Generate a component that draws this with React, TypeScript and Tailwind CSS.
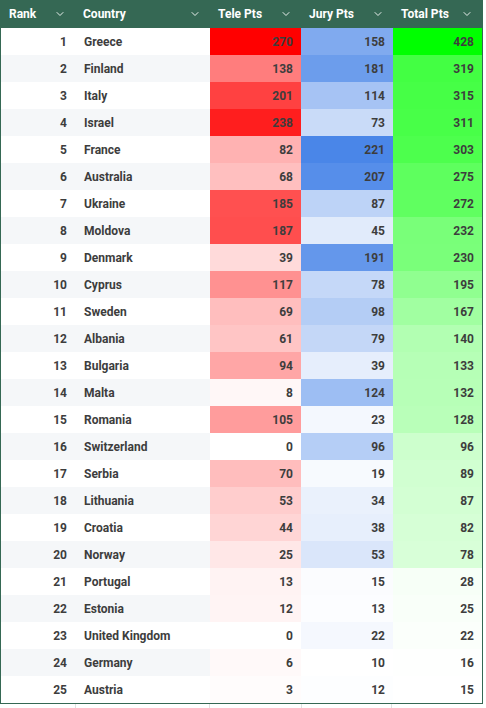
import { ChevronDown } from 'lucide-react';

type Row = { rank: number; country: string; tele: number; jury: number; total: number };

const rows: Row[] = [
  { rank: 1, country: 'Greece', tele: 270, jury: 158, total: 428 },
  { rank: 2, country: 'Finland', tele: 138, jury: 181, total: 319 },
  { rank: 3, country: 'Italy', tele: 201, jury: 114, total: 315 },
  { rank: 4, country: 'Israel', tele: 238, jury: 73, total: 311 },
  { rank: 5, country: 'France', tele: 82, jury: 221, total: 303 },
  { rank: 6, country: 'Australia', tele: 68, jury: 207, total: 275 },
  { rank: 7, country: 'Ukraine', tele: 185, jury: 87, total: 272 },
  { rank: 8, country: 'Moldova', tele: 187, jury: 45, total: 232 },
  { rank: 9, country: 'Denmark', tele: 39, jury: 191, total: 230 },
  { rank: 10, country: 'Cyprus', tele: 117, jury: 78, total: 195 },
  { rank: 11, country: 'Sweden', tele: 69, jury: 98, total: 167 },
  { rank: 12, country: 'Albania', tele: 61, jury: 79, total: 140 },
  { rank: 13, country: 'Bulgaria', tele: 94, jury: 39, total: 133 },
  { rank: 14, country: 'Malta', tele: 8, jury: 124, total: 132 },
  { rank: 15, country: 'Romania', tele: 105, jury: 23, total: 128 },
  { rank: 16, country: 'Switzerland', tele: 0, jury: 96, total: 96 },
  { rank: 17, country: 'Serbia', tele: 70, jury: 19, total: 89 },
  { rank: 18, country: 'Lithuania', tele: 53, jury: 34, total: 87 },
  { rank: 19, country: 'Croatia', tele: 44, jury: 38, total: 82 },
  { rank: 20, country: 'Norway', tele: 25, jury: 53, total: 78 },
  { rank: 21, country: 'Portugal', tele: 13, jury: 15, total: 28 },
  { rank: 22, country: 'Estonia', tele: 12, jury: 13, total: 25 },
  { rank: 23, country: 'United Kingdom', tele: 0, jury: 22, total: 22 },
  { rank: 24, country: 'Germany', tele: 6, jury: 10, total: 16 },
  { rank: 25, country: 'Austria', tele: 3, jury: 12, total: 15 },
];

// white -> target colour, linear on value between min and max
function scale(v: number, min: number, max: number, rgb: [number, number, number]) {
  const t = Math.max(0, Math.min(1, (v - min) / (max - min)));
  const c = rgb.map((x) => Math.round(255 + (x - 255) * t));
  return `rgb(${c[0]}, ${c[1]}, ${c[2]})`;
}

const headers = ['Rank', 'Country', 'Tele Pts', 'Jury Pts', 'Total Pts'];
const cols = 'grid grid-cols-[74px_135px_91px_92px_89px]';

export default function App() {
  return (
    <div className="w-[486px] h-[708px] bg-white overflow-hidden text-[12px] font-bold text-[#3d3d3d]" style={{ fontFamily: 'Roboto, "Liberation Sans", sans-serif' }}>
      <div className="w-[483px] border border-t-0 border-[#356854]">
        {/* Header */}
        <div className={`${cols} h-[28px] bg-[#356854] text-white`}>
          {headers.map((h) => (
            <div key={h} className="flex items-center justify-between pl-[8px] pr-[9px]">
              <span>{h}</span>
              <ChevronDown size={12} strokeWidth={2} color="#e8efec" />
            </div>
          ))}
        </div>

        {/* Rows */}
        {rows.map((r, i) => {
          const stripe = i % 2 === 1 ? 'bg-[#f5f7f9]' : 'bg-white';
          return (
            <div key={r.rank} className={`${cols} h-[27px] ${stripe}`}>
              <div className="flex items-center justify-end pr-[8px]">{r.rank}</div>
              <div className="flex items-center pl-[9px]">{r.country}</div>
              <div className="flex items-center justify-end pr-[8px]" style={{ backgroundColor: scale(r.tele, 0, 270, [255, 0, 0]) }}>
                {r.tele}
              </div>
              <div className="flex items-center justify-end pr-[8px]" style={{ backgroundColor: scale(r.jury, 10, 221, [74, 134, 232]) }}>
                {r.jury}
              </div>
              <div className="flex items-center justify-end pr-[8px]" style={{ backgroundColor: scale(r.total, 15, 428, [0, 255, 0]) }}>
                {r.total}
              </div>
            </div>
          );
        })}
      </div>

      {/* sheet gridlines below the table */}
      <div className="grid grid-cols-[76px_134px_92px_90px_91px] h-[10px]">
        <div className="border-r border-[#e1e1e1]" />
        <div className="border-r border-[#e1e1e1]" />
        <div className="border-r border-[#e1e1e1]" />
        <div className="border-r border-[#e1e1e1]" />
        <div />
      </div>
    </div>
  );
}
